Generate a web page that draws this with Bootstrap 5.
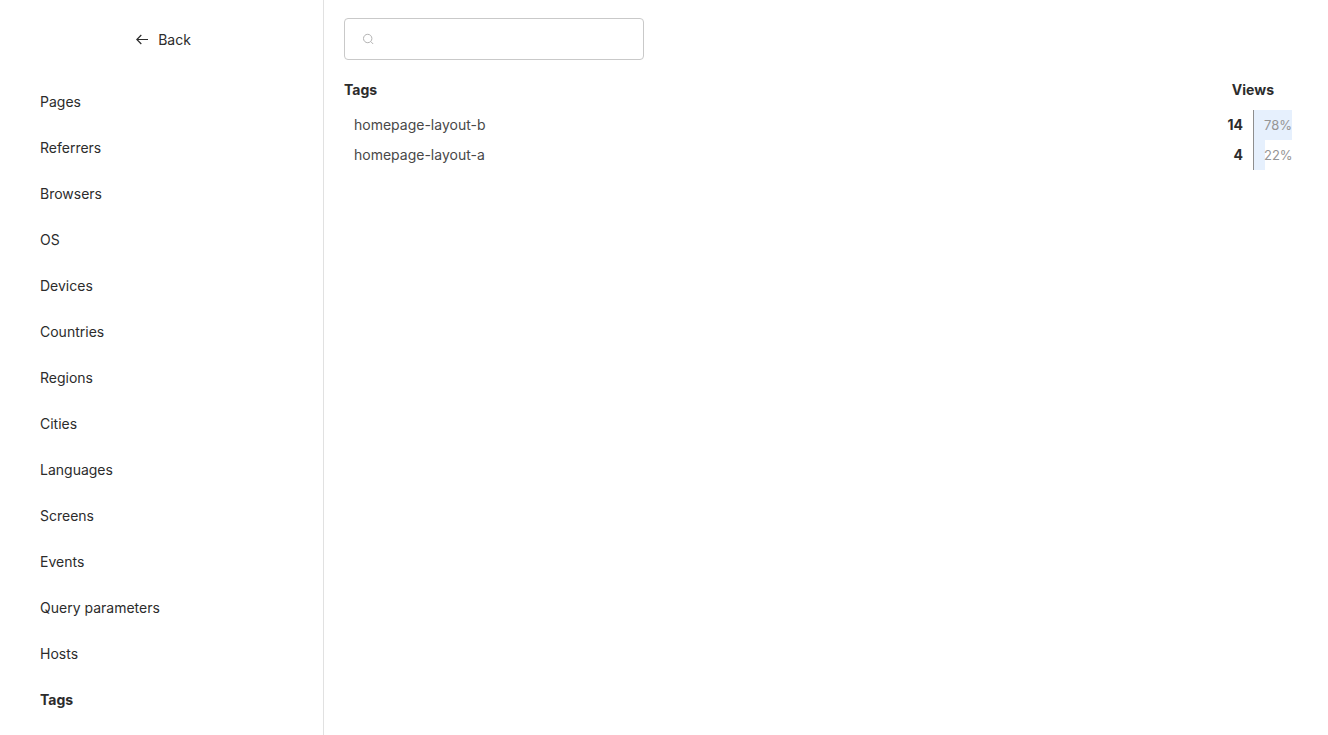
<!DOCTYPE html>
<html lang="en">
<head>
<meta charset="utf-8">
<meta name="viewport" content="width=device-width, initial-scale=1">
<title>Tags</title>
<link href="https://cdn.jsdelivr.net/npm/bootstrap@5.3.0/dist/css/bootstrap.min.css" rel="stylesheet">
<style>
  body { font-family: Inter, sans-serif; font-size: 14px; line-height: 20px; color: #2c2c2c; background: #fff; }
  a { color: inherit; text-decoration: none; }
  .side { flex: 0 0 324px; border-right: 1px solid #e1e1e1; padding: 20px 16px 0 20px; }
  .back { height: 40px; gap: 10px; margin-bottom: 19px; }
  .side .nav-link { color: inherit; padding: 13px 20px; }
  .side .nav-link.active { font-weight: 700; }
  .content { padding: 18px 36px 0 20px; min-width: 0; }
  .search { width: 300px; height: 42px; border: 1px solid #c9c9c9; border-radius: 4px; padding: 0 17px; gap: 10px; }
  .search svg { color: #b3b3b3; }
  .search input { border: 0; outline: 0; background: transparent; min-width: 0; }
  .metrics { margin-top: 20px; width: 100%; }
  .metrics th, .metrics td { padding: 0; height: 30px; vertical-align: middle; }
  .metrics thead th { height: 30px; padding-bottom: 10px; font-weight: 700; }
  .metrics thead .views { text-align: right; padding-right: 18px; }
  .metrics .label { padding-left: 10px; color: #484848; }
  .metrics .count { font-weight: 700; text-align: right; padding-right: 10px; }
  .metrics .share { width: 39px; max-width: 39px; color: #959595; font-size: 13px; }
  .meter { height: 30px; border-left: 1px solid #8e8e8e; padding-left: 10px; }
  .meter-fill { background: #e6f0fd; }
</style>
</head>
<body>
<div class="d-flex min-vh-100">
  <aside class="side">
    <a href="#" class="back d-flex align-items-center justify-content-center">
      <svg width="12" height="12" viewBox="0 0 12 12" fill="none" stroke="currentColor" stroke-width="1.2" aria-hidden="true"><path d="M12 5.500H.8M5.300 1 .8 5.500l4.500 4.500"/></svg>
      <span>Back</span>
    </a>
    <nav class="nav flex-column">
      <a class="nav-link" href="#">Pages</a>
      <a class="nav-link" href="#">Referrers</a>
      <a class="nav-link" href="#">Browsers</a>
      <a class="nav-link" href="#">OS</a>
      <a class="nav-link" href="#">Devices</a>
      <a class="nav-link" href="#">Countries</a>
      <a class="nav-link" href="#">Regions</a>
      <a class="nav-link" href="#">Cities</a>
      <a class="nav-link" href="#">Languages</a>
      <a class="nav-link" href="#">Screens</a>
      <a class="nav-link" href="#">Events</a>
      <a class="nav-link" href="#">Query parameters</a>
      <a class="nav-link" href="#">Hosts</a>
      <a class="nav-link active" aria-current="page" href="#">Tags</a>
    </nav>
  </aside>
  <main class="content flex-grow-1">
    <label class="search d-flex align-items-center">
      <svg width="12" height="12" viewBox="0 0 12 12" fill="none" stroke="currentColor" aria-hidden="true"><circle cx="5.700" cy="5.500" r="4.200"/><path d="m8.700 8.500 2.500 2.500"/></svg>
      <input class="flex-grow-1" type="text" aria-label="Search">
    </label>
    <table class="metrics">
      <thead>
        <tr><th scope="col">Tags</th><th scope="colgroup" colspan="2" class="views">Views</th></tr>
      </thead>
      <tbody>
        <tr><td class="label"><a href="#">homepage-layout-b</a></td><td class="count">14</td><td class="share"><div class="meter position-relative d-flex align-items-center"><span class="meter-fill position-absolute top-0 start-0 h-100" style="width:100%"></span><span class="position-relative">78%</span></div></td></tr>
        <tr><td class="label"><a href="#">homepage-layout-a</a></td><td class="count">4</td><td class="share"><div class="meter position-relative d-flex align-items-center"><span class="meter-fill position-absolute top-0 start-0 h-100" style="width:28%"></span><span class="position-relative">22%</span></div></td></tr>
      </tbody>
    </table>
  </main>
</div>
<script src="https://cdn.jsdelivr.net/npm/bootstrap@5.3.0/dist/js/bootstrap.bundle.min.js"></script>
</body>
</html>
